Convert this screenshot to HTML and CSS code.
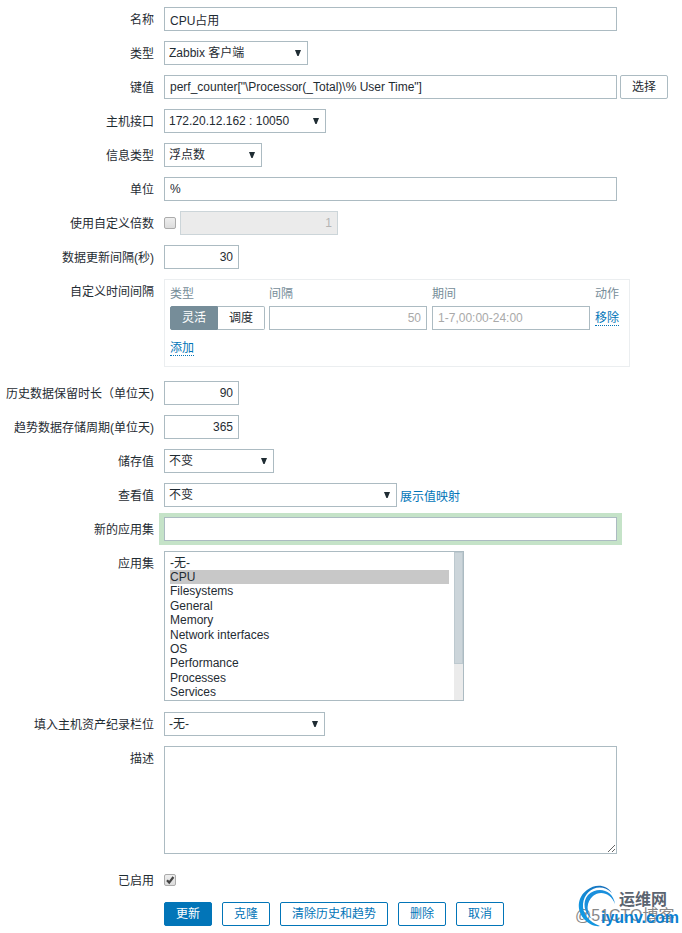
FILE: index.html
```html
<!DOCTYPE html>
<html lang="zh-CN">
<head>
    <meta charset="UTF-8">
    <meta name="viewport" content="width=device-width, initial-scale=1.0">
    <title>监控项</title>
    <link rel="stylesheet" href="styles.css">
</head>
<body>

    <form class="item-form">
        <div class="row">
            <label class="name" for="name">名称</label>
            <div class="field"><input class="text wide" type="text" id="name" value="CPU占用"></div>
        </div>
        <div class="row">
            <label class="name" for="type">类型</label>
            <div class="field">
                <select class="select w-type" id="type"><option>Zabbix 客户端</option></select>
            </div>
        </div>
        <div class="row">
            <label class="name" for="key">键值</label>
            <div class="field">
                <input class="text wide" type="text" id="key" value="perf_counter[&quot;\Processor(_Total)\% User Time&quot;]">
                <button class="btn-grey" type="button">选择</button>
            </div>
        </div>
        <div class="row">
            <label class="name" for="interface">主机接口</label>
            <div class="field">
                <select class="select w-interface" id="interface"><option>172.20.12.162 : 10050</option></select>
            </div>
        </div>
        <div class="row">
            <label class="name" for="value-type">信息类型</label>
            <div class="field">
                <select class="select w-value" id="value-type"><option>浮点数</option></select>
            </div>
        </div>
        <div class="row">
            <label class="name" for="units">单位</label>
            <div class="field"><input class="text wide" type="text" id="units" value="%"></div>
        </div>
        <div class="row">
            <label class="name" for="multiplier">使用自定义倍数</label>
            <div class="field">
                <input class="check" type="checkbox" id="multiplier">
                <input class="text medium number" type="text" aria-label="倍数" value="1" disabled>
            </div>
        </div>
        <div class="row">
            <label class="name" for="delay">数据更新间隔(秒)</label>
            <div class="field"><input class="text small number" type="text" id="delay" value="30"></div>
        </div>
        <div class="row block">
            <span class="name">自定义时间间隔</span>
            <div class="field">
                <div class="intervals">
                    <table>
                        <thead>
                            <tr><th>类型</th><th>间隔</th><th>期间</th><th>动作</th></tr>
                        </thead>
                        <tbody>
                            <tr>
                                <td>
                                    <div class="segmented">
                                        <input type="radio" name="flex" id="flexible" checked>
                                        <label for="flexible">灵活</label>
                                        <input type="radio" name="flex" id="scheduling">
                                        <label for="scheduling">调度</label>
                                    </div>
                                </td>
                                <td><input class="text medium number" type="text" aria-label="间隔" placeholder="50"></td>
                                <td><input class="text medium" type="text" aria-label="期间" placeholder="1-7,00:00-24:00"></td>
                                <td><a class="link-dotted" href="#">移除</a></td>
                            </tr>
                        </tbody>
                    </table>
                    <a class="link-dotted" href="#">添加</a>
                </div>
            </div>
        </div>
        <div class="row">
            <label class="name" for="history">历史数据保留时长（单位天)</label>
            <div class="field"><input class="text small number" type="text" id="history" value="90"></div>
        </div>
        <div class="row">
            <label class="name" for="trends">趋势数据存储周期(单位天)</label>
            <div class="field"><input class="text small number" type="text" id="trends" value="365"></div>
        </div>
        <div class="row">
            <label class="name" for="store">储存值</label>
            <div class="field">
                <select class="select w-store" id="store"><option>不变</option></select>
            </div>
        </div>
        <div class="row">
            <label class="name" for="show">查看值</label>
            <div class="field">
                <select class="select w-show" id="show"><option>不变</option></select>
                <a class="link" href="#">展示值映射</a>
            </div>
        </div>
        <div class="row">
            <label class="name" for="new-app">新的应用集</label>
            <div class="field"><input class="text wide highlight" type="text" id="new-app"></div>
        </div>
        <div class="row">
            <label class="name" for="apps">应用集</label>
            <div class="field">
                <div class="list">
                    <select class="listbox" id="apps" multiple>
                        <option>-无-</option>
                        <option selected>CPU</option>
                        <option>Filesystems</option>
                        <option>General</option>
                        <option>Memory</option>
                        <option>Network interfaces</option>
                        <option>OS</option>
                        <option>Performance</option>
                        <option>Processes</option>
                        <option>Services</option>
                    </select>
                    <span class="scrollbar"><span class="thumb"></span></span>
                </div>
            </div>
        </div>
        <div class="row">
            <label class="name" for="inventory">填入主机资产纪录栏位</label>
            <div class="field">
                <select class="select w-inventory" id="inventory"><option>-无-</option></select>
            </div>
        </div>
        <div class="row block">
            <label class="name" for="description">描述</label>
            <div class="field"><textarea class="wide" id="description"></textarea></div>
        </div>
        <div class="row">
            <label class="name" for="enabled">已启用</label>
            <div class="field"><input class="check" type="checkbox" id="enabled" checked></div>
        </div>
        <div class="row">
            <span class="name"></span>
            <div class="field buttons">
                <button class="btn primary" type="submit">更新</button>
                <button class="btn" type="button">克隆</button>
                <button class="btn" type="button">清除历史和趋势</button>
                <button class="btn" type="button">删除</button>
                <button class="btn" type="button">取消</button>
            </div>
        </div>
    </form>

    <div class="watermark">
        <svg width="110" height="52" viewBox="0 0 110 52">
            <defs>
                <linearGradient id="swirl" x1="0" y1="1" x2="1" y2="0">
                    <stop offset="0" stop-color="#12a5ee"/>
                    <stop offset="1" stop-color="#1467b4"/>
                </linearGradient>
            </defs>
            <text class="credit" x="3" y="40">@51CTO博客</text>
            <path fill="url(#swirl)" d="M40 12C34 3 23 3 15 9C5 16 4 30 13 39C17 43 23 46 28 45C17 41 10 32 11 23C12 9 28 0 40 12Z"/>
            <path fill="#1a8fdc" d="M43 23C39 12 28 9 21 15C14 21 14 31 20 38C12 32 10 21 16 14C25 5 41 8 43 23Z"/>
            <text class="brand" x="47" y="24">运维网</text>
            <text class="site" x="29" y="42">iyunv.com</text>
        </svg>
    </div>

</body>
</html>
```
FILE: styles.css
```css
* {
    box-sizing: border-box;
}

body {
    position: relative;
    margin: 0;
    min-height: 100vh;
    background-color: #fff;
    color: #1f2c33;
    font-family: "Liberation Sans", "Noto Sans CJK SC", Arial, sans-serif;
    font-size: 12px;
}

input,
select,
textarea,
button {
    margin: 0;
    font-family: inherit;
    font-size: 12px;
    color: #1f2c33;
}

.item-form {
    display: flex;
    flex-direction: column;
    gap: 10px;
    padding: 7px 0;
}

.row {
    display: grid;
    grid-template-columns: 154px minmax(0, 1fr);
    column-gap: 10px;
}

.row.block {
    padding-bottom: 4px;
}

.name {
    line-height: 26px;
    height: 24px;
    text-align: right;
    white-space: nowrap;
}

.field {
    display: flex;
    align-items: center;
    gap: 3px;
    min-height: 24px;
}

.text,
.select,
.listbox,
textarea {
    border: 1px solid #acbbc2;
    border-radius: 0;
    background-color: #fff;
    outline: none;
}

.text {
    height: 24px;
    padding: 0 5px;
}

.wide {
    width: 453px;
    min-width: 0;
}

.medium {
    width: 158px;
}

.small {
    width: 75px;
}

.number {
    text-align: right;
}

.text::placeholder {
    color: #a9a9a9;
}

.text:disabled {
    border-color: #ccd5d9;
    background-color: #ebebeb;
    color: #b4b4b4;
}

.highlight {
    box-shadow: -1px 0 0 4px #c5e3c8, 1px 0 0 4px #c5e3c8;
}

/* drop-downs */
.select {
    appearance: none;
    height: 24px;
    padding: 0 20px 0 4px;
    background-image: url("data:image/svg+xml,%3Csvg xmlns='http://www.w3.org/2000/svg' width='6' height='6'%3E%3Cpath d='M0 0h6L3.6 6H2.4z' fill='%231f2c33'/%3E%3C/svg%3E");
    background-repeat: no-repeat;
    background-position: right 6px center;
}

.w-type { width: 144px; }
.w-interface { width: 162px; }
.w-value { width: 98px; }
.w-store { width: 110px; }
.w-show { width: 233px; }
.w-inventory { width: 161px; }

.list {
    position: relative;
    width: 300px;
    margin-bottom: 1px;
}

.listbox {
    display: block;
    width: 100%;
    height: 150px;
    padding: 1px 14px 1px 5px;
    overflow: hidden;
}

.listbox option {
    padding: 0;
}

.listbox option:checked {
    background: #c8c8c8 linear-gradient(#c8c8c8, #c8c8c8);
    color: #1f2c33;
}

.scrollbar {
    position: absolute;
    top: 1px;
    right: 1px;
    bottom: 1px;
    width: 9px;
    background-color: #ebebeb;
}

.thumb {
    display: block;
    height: 76%;
    border: 1px solid #bdc9cf;
    background-color: #ccd5da;
}

textarea {
    display: block;
    height: 108px;
    padding: 4px 5px;
    resize: both;
}

/* tick boxes */
.check {
    appearance: none;
    width: 12px;
    height: 12px;
    margin-right: 1px;
    border: 1px solid #ababab;
    border-radius: 2px;
    background: linear-gradient(#eee, #dcdcdc);
}

.check:checked {
    background: url("data:image/svg+xml,%3Csvg xmlns='http://www.w3.org/2000/svg' width='10' height='10'%3E%3Cpath d='M2 5.2L4.2 7.6L8.4 2' fill='none' stroke='%23444' stroke-width='2.2'/%3E%3C/svg%3E") center no-repeat, linear-gradient(#eee, #dcdcdc);
}

/* custom intervals */
.intervals {
    width: 466px;
    padding: 5px 5px 10px;
    border: 1px solid #ebeef0;
}

.intervals table {
    margin-bottom: 11px;
    border-collapse: collapse;
}

.intervals th {
    padding: 0 0 3px;
    color: #768d99;
    font-weight: normal;
    line-height: 18px;
    text-align: left;
}

.intervals td {
    padding: 0 5px 0 0;
}

.intervals td:first-child {
    padding-right: 4px;
}

.intervals td:last-child {
    padding-right: 0;
}

.intervals td .text {
    display: block;
}

.segmented {
    display: flex;
}

.segmented input {
    position: absolute;
    opacity: 0;
}

.segmented label {
    height: 24px;
    padding: 0 11px;
    border: 1px solid #acbbc2;
    border-left: 0;
    border-radius: 0 2px 2px 0;
    line-height: 22px;
}

.segmented label:first-of-type {
    border-left: 1px solid #acbbc2;
    border-radius: 2px 0 0 2px;
}

.segmented input:checked + label {
    border-color: #768d99;
    background-color: #768d99;
    color: #fff;
}

/* links and buttons */
.link,
.link-dotted {
    color: #0275b8;
    text-decoration: none;
}

.link-dotted {
    display: inline-block;
    border-bottom: 1px dotted #0275b8;
    line-height: 14px;
}

.btn,
.btn-grey {
    height: 24px;
    padding: 0 11px;
    border: 1px solid #0275b8;
    border-radius: 2px;
    background-color: #fff;
    color: #0275b8;
    line-height: 22px;
    white-space: nowrap;
    cursor: pointer;
}

.btn-grey {
    border-color: #acbbc2;
    color: #1f2c33;
}

.btn.primary {
    background-color: #0275b8;
    color: #fff;
}

.buttons {
    gap: 10px;
}

/* stamp over the bottom right corner */
.watermark {
    position: absolute;
    right: 0;
    bottom: 0;
    pointer-events: none;
}

.watermark svg {
    display: block;
}

.credit {
    fill: #888;
    font-size: 16px;
}

.brand {
    fill: #5b6470;
    font-size: 16px;
    font-weight: bold;
}

.site {
    fill: #0b7fd0;
    font-size: 16px;
    font-weight: bold;
}
```
